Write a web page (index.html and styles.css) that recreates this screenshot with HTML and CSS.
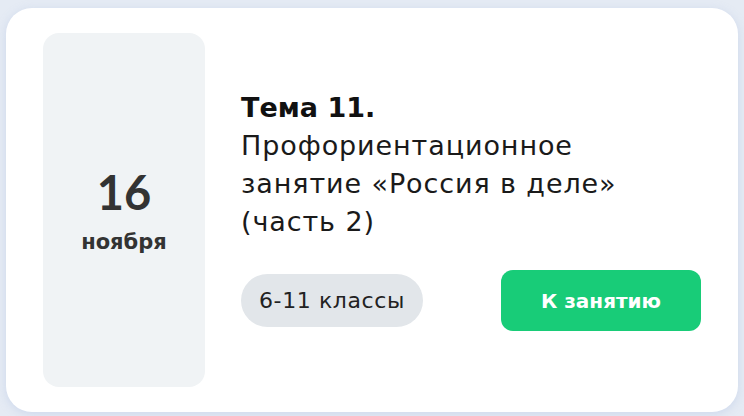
FILE: index.html
```html
<!DOCTYPE html>
<html lang="ru">
<head>
  <meta charset="UTF-8">
  <title>Тема 11</title>
  <link rel="stylesheet" href="styles.css">
</head>
<body>

  <div class="card">
    <div class="date-box">
      <div class="day">16</div>
      <div class="month">ноября</div>
    </div>

    <div class="lesson">
      <h2 class="lesson-title">
        <b>Тема 11.</b><br>
        Профориентационное занятие «Россия в деле» (часть 2)
      </h2>
      <div class="lesson-footer">
        <span class="grades">6-11 классы</span>
        <button class="go-btn">К занятию</button>
      </div>
    </div>
  </div>

</body>
</html>
```

FILE: styles.css
```css
body {
  margin: 0;
  padding: 8px 6px 4px 6px;
  background: #e5ebf4;
  font-family: "DejaVu Sans", "Noto Sans", sans-serif;
}

.card {
  display: flex;
  gap: 36px;
  height: 354px;
  padding: 25px 37px;
  background: #fff;
  border-radius: 26px;
  box-shadow: 0 2px 10px rgba(160, 180, 220, 0.35);
}

.date-box {
  width: 162px;
  flex-shrink: 0;
  display: flex;
  flex-direction: column;
  align-items: center;
  justify-content: center;
  background: #f0f3f5;
  border-radius: 16px;
  color: #333;
  padding-top: 3px;
}

.day {
  font-family: Lato, sans-serif;
  font-size: 47px;
  font-weight: 700;
  line-height: 1;
}

.month {
  font-size: 21px;
  font-weight: 700;
  margin-top: 14px;
}

.lesson {
  flex: 1;
  display: flex;
  flex-direction: column;
  justify-content: center;
}

.lesson-title {
  margin: 0;
  font-size: 27px;
  font-weight: 400;
  line-height: 38px;
  letter-spacing: 0.9px;
  color: #1a1a1a;
  max-width: 390px;
}

.lesson-title b {
  font-weight: 700;
  letter-spacing: 0;
  color: #111;
}

.lesson-footer {
  display: flex;
  justify-content: space-between;
  align-items: center;
  margin-top: 29px;
}

.grades {
  display: inline-block;
  padding: 14px 18px;
  border-radius: 27px;
  background: #e2e6ea;
  font-size: 22px;
  letter-spacing: 0.6px;
  color: #222;
}

.go-btn {
  width: 200px;
  height: 61px;
  border: none;
  border-radius: 12px;
  background: #18cc78;
  color: #fff;
  font-family: "DejaVu Sans", sans-serif;
  font-size: 20px;
  font-weight: 700;
  cursor: pointer;
}
```
